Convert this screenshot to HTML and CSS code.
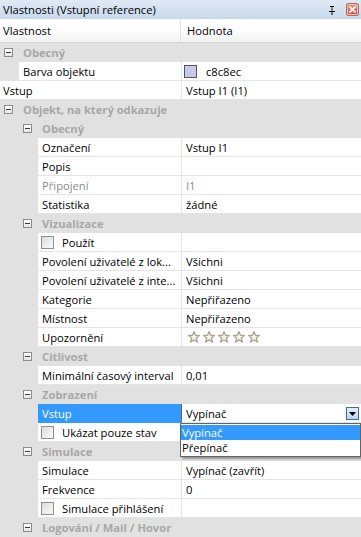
FILE: index.html
```html
<!DOCTYPE html>
<html>
<head>
<meta charset="utf-8">
<link rel="stylesheet" href="styles.css">
</head>
<body>
<div class="panel">
  <div class="titlebar">
    <span class="title">Vlastnosti (Vstupní reference)</span>
    <span class="tb-icons">
      <svg class="pin" width="8" height="9" viewBox="0 0 8 9"><path d="M2 0h4v1H5v4h2v1H4.5v3h-1V6H1V5h2V1H2z" fill="#000"/><rect x="3.5" y="1" width="1" height="4" fill="#fff"/></svg>
      <span class="close"><svg width="7" height="7" viewBox="0 0 7 7"><path d="M0.5 0.5L6.5 6.5M6.5 0.5L0.5 6.5" stroke="#fff" stroke-width="1.6"/></svg></span>
    </span>
  </div>
  <div class="header">
    <div class="hname">Vlastnost</div>
    <div class="hval">Hodnota</div>
  </div>
  <div class="grid">
    <div class="cat l0"><span class="minus"></span><span class="ctext">Obecný</span></div>
    <div class="row l1"><div class="name">Barva objektu</div><div class="val"><span class="swatch"></span>c8c8ec</div></div>
    <div class="row l0"><div class="name">Vstup</div><div class="val">Vstup I1 (I1)</div></div>
    <div class="cat l0"><span class="minus"></span><span class="ctext">Objekt, na který odkazuje</span></div>
    <div class="cat l1"><span class="minus"></span><span class="ctext">Obecný</span></div>
    <div class="row l2"><div class="name">Označení</div><div class="val">Vstup I1</div></div>
    <div class="row l2"><div class="name">Popis</div><div class="val"></div></div>
    <div class="row l2 dis"><div class="name">Připojení</div><div class="val">I1</div></div>
    <div class="row l2"><div class="name">Statistika</div><div class="val">žádné</div></div>
    <div class="cat l1"><span class="minus"></span><span class="ctext">Vizualizace</span></div>
    <div class="row l2"><div class="name"><span class="chk"></span>Použít</div><div class="val"></div></div>
    <div class="row l2"><div class="name">Povolení uživatelé z lok...</div><div class="val">Všichni</div></div>
    <div class="row l2"><div class="name">Povolení uživatelé z inte...</div><div class="val">Všichni</div></div>
    <div class="row l2"><div class="name">Kategorie</div><div class="val">Nepřiřazeno</div></div>
    <div class="row l2"><div class="name">Místnost</div><div class="val">Nepřiřazeno</div></div>
    <div class="row l2"><div class="name">Upozornění</div><div class="val stars">
      <svg class="star" width="12" height="12" viewBox="0 0 12 12"><path d="M6 0.8L7.5 4.2L11.2 4.5L8.4 7L9.3 10.9L6 8.9L2.7 10.9L3.6 7L0.8 4.5L4.5 4.2Z" fill="#f4f2ea" stroke="#a8a390" stroke-width="1.3"/></svg>
      <svg class="star" width="12" height="12" viewBox="0 0 12 12"><path d="M6 0.8L7.5 4.2L11.2 4.5L8.4 7L9.3 10.9L6 8.9L2.7 10.9L3.6 7L0.8 4.5L4.5 4.2Z" fill="#f4f2ea" stroke="#a8a390" stroke-width="1.3"/></svg>
      <svg class="star" width="12" height="12" viewBox="0 0 12 12"><path d="M6 0.8L7.5 4.2L11.2 4.5L8.4 7L9.3 10.9L6 8.9L2.7 10.9L3.6 7L0.8 4.5L4.5 4.2Z" fill="#f4f2ea" stroke="#a8a390" stroke-width="1.3"/></svg>
      <svg class="star" width="12" height="12" viewBox="0 0 12 12"><path d="M6 0.8L7.5 4.2L11.2 4.5L8.4 7L9.3 10.9L6 8.9L2.7 10.9L3.6 7L0.8 4.5L4.5 4.2Z" fill="#f4f2ea" stroke="#a8a390" stroke-width="1.3"/></svg>
      <svg class="star" width="12" height="12" viewBox="0 0 12 12"><path d="M6 0.8L7.5 4.2L11.2 4.5L8.4 7L9.3 10.9L6 8.9L2.7 10.9L3.6 7L0.8 4.5L4.5 4.2Z" fill="#f4f2ea" stroke="#a8a390" stroke-width="1.3"/></svg>
    </div></div>
    <div class="cat l1"><span class="minus"></span><span class="ctext">Citlivost</span></div>
    <div class="row l2"><div class="name">Minimální časový interval</div><div class="val">0,01</div></div>
    <div class="cat l1"><span class="minus"></span><span class="ctext">Zobrazení</span></div>
    <div class="row l2 sel"><div class="name">Vstup</div><div class="val edit">Vypínač<span class="ddbtn"><svg width="7" height="4" viewBox="0 0 7 4"><path d="M0 0h7L3.5 4z" fill="#000"/></svg></span></div>
      <div class="popup">
        <div class="opt hl">Vypínač</div>
        <div class="opt">Přepínač</div>
      </div>
    </div>
    <div class="row l2"><div class="name"><span class="chk"></span>Ukázat pouze stav</div><div class="val"></div></div>
    <div class="cat l1"><span class="minus"></span><span class="ctext">Simulace</span></div>
    <div class="row l2"><div class="name">Simulace</div><div class="val">Vypínač (zavřít)</div></div>
    <div class="row l2"><div class="name">Frekvence</div><div class="val">0</div></div>
    <div class="row l2"><div class="name"><span class="chk"></span>Simulace přihlášení</div><div class="val"></div></div>
    <div class="cat l1"><span class="minus"></span><span class="ctext">Logování / Mail / Hovor</span></div>
  </div>
</div>
</body>
</html>
```
FILE: styles.css
```css
html, body {
  margin: 0;
  padding: 0;
  background: #e1e1e1;
}
body {
  font-family: "Open Sans", "Noto Sans", sans-serif;
  font-size: 11.2px;
  color: #000;
  width: 361px;
  height: 537px;
  overflow: hidden;
}
.panel {
  width: 361px;
}
.titlebar {
  height: 19px;
  background: linear-gradient(#e0eaf6, #c8d8ec);
  display: flex;
  align-items: center;
  justify-content: space-between;
  padding-left: 3px;
  box-sizing: border-box;
}
.tb-icons {
  display: flex;
  align-items: center;
  gap: 10px;
  padding-right: 2px;
}
.pin {
  display: block;
  margin-top: 1px;
}
.close {
  width: 13px;
  height: 13px;
  box-sizing: border-box;
  border: 1px solid #b56a60;
  border-radius: 2px;
  background: linear-gradient(#e89b8c, #c4503d);
  box-shadow: inset 0 0 0 1px #f0c0b6;
  display: flex;
  align-items: center;
  justify-content: center;
}
.close svg {
  display: block;
}
.header {
  height: 24px;
  display: flex;
  background: linear-gradient(#ffffff 40%, #f2f2f2);
  border-bottom: 1px solid #d5d5d5;
  box-sizing: border-box;
}
.hname {
  width: 181px;
  padding-left: 3px;
  box-sizing: border-box;
  display: flex;
  align-items: center;
  border-right: 1px solid #e3e3e3;
}
.hval {
  flex: 1;
  padding-left: 6px;
  display: flex;
  align-items: center;
}
.grid {
  display: flex;
  flex-direction: column;
}
.l0 { --ind: 0px; }
.l1 { --ind: 19px; }
.l2 { --ind: 38px; }
.cat {
  height: 19px;
  display: flex;
  align-items: center;
  background: #e1e1e1;
  font-weight: bold;
  color: #a8a8a8;
}
.minus {
  width: 9px;
  height: 9px;
  box-sizing: border-box;
  border: 1px solid #8c8c8c;
  background: linear-gradient(#ffffff, #e6e6e6);
  margin-left: calc(var(--ind) + 4px);
  position: relative;
  flex: none;
}
.minus::after {
  content: "";
  position: absolute;
  left: 1px;
  top: 3px;
  width: 5px;
  height: 1px;
  background: #3a3a3a;
}
.ctext {
  margin-left: 10px;
}
.row {
  height: 19px;
  display: flex;
  position: relative;
  background: #e1e1e1;
}
.name {
  margin-left: var(--ind);
  width: calc(181px - var(--ind));
  box-sizing: border-box;
  background: #fff;
  border-bottom: 1px solid #e4e4e4;
  padding-left: 4px;
  display: flex;
  align-items: center;
  white-space: nowrap;
  overflow: hidden;
}
.l0 .name { padding-left: 3px; }
.val {
  flex: 1;
  background: #fff;
  border-left: 1px solid #e4e4e4;
  border-bottom: 1px solid #e4e4e4;
  padding-left: 4px;
  display: flex;
  align-items: center;
  white-space: nowrap;
}
.dis .name, .dis .val {
  color: #8a8a8a;
}
.swatch {
  width: 13px;
  height: 13px;
  box-sizing: border-box;
  border: 1px solid #555;
  background: #c8c8ec;
  margin-left: -2px;
  margin-right: 9px;
}
.chk {
  width: 13px;
  height: 13px;
  box-sizing: border-box;
  border: 1px solid #8e8f8f;
  background: linear-gradient(135deg, #dcdcdc, #fbfbfb);
  margin-left: -1px;
  margin-right: 8px;
  flex: none;
}
.stars {
  gap: 3px;
  padding-left: 6px;
}
.star {
  display: block;
}
.sel .name {
  background: #3399ff;
  color: #fff;
  border-bottom-color: #3399ff;
}
.sel .val {
  border-left: 1px solid #3a6ea5;
  position: relative;
}
.ddbtn {
  position: absolute;
  right: 2px;
  top: 3px;
  width: 13px;
  height: 13px;
  box-sizing: border-box;
  border: 1px solid #3c6e9c;
  background: linear-gradient(#e4f0fb, #b7d4f0);
  display: flex;
  align-items: center;
  justify-content: center;
}
.popup {
  position: absolute;
  left: 180px;
  top: 19px;
  width: 181px;
  box-sizing: border-box;
  border: 1px solid #646464;
  background: #fff;
  box-shadow: 2px 2px 2px rgba(0,0,0,0.35);
  z-index: 5;
  padding: 1px 0;
}
.opt {
  height: 15px;
  line-height: 15px;
  padding-left: 1px;
}
.opt.hl {
  background: #3399ff;
  color: #fff;
}
```
